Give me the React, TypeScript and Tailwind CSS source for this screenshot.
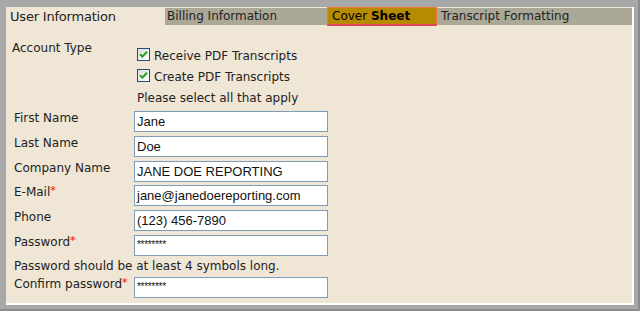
const fields = [
  { label: 'First Name', value: 'Jane' },
  { label: 'Last Name', value: 'Doe' },
  { label: 'Company Name', value: 'JANE DOE REPORTING' },
  { label: 'E-Mail', value: 'jane@janedoereporting.com', required: true },
  { label: 'Phone', value: '(123) 456-7890' },
  { label: 'Password', value: '********', required: true, secret: true },
];

const CheckBox = () => (
  <span className="w-[13px] h-[13px] border border-[#1c5180] bg-gradient-to-br from-[#dcdcd7] to-white flex items-center justify-center">
    <svg width="9" height="9" viewBox="0 0 9 9">
      <path d="M1 4.2 L3.4 6.6 L8 1.8" fill="none" stroke="#21a121" strokeWidth="2" />
    </svg>
  </span>
);

const Req = () => <span className="text-[#f00] text-[11px] align-top leading-none">*</span>;

const Field = ({ value, secret }: { value: string; secret?: boolean }) => (
  <div className="w-[194px] h-[21px] bg-white border border-[#7f9db9] pl-[2px] text-[#111] font-['Liberation_Sans',Arial,sans-serif]">
    {secret ? (
      <div className="text-[10px] leading-none pt-[4px] tracking-[-0.3px]">{value}</div>
    ) : (
      <div className="text-[13px] leading-[19px]">{value}</div>
    )}
  </div>
);

export default function App() {
  return (
    <div className="w-[640px] h-[311px] bg-[#a8a8a8] border-r-2 border-b-2 border-[#8c8c8c] pt-[7px] pl-[6px] pr-[4px] pb-[4px] font-['DejaVu_Sans',Verdana,sans-serif] text-[12px] text-[#222]">
      <div className="h-full bg-[#efe6d6] border-r-2 border-b-2 border-white flex flex-col">
        {/* tabs */}
        <div className="h-[19px] flex items-center">
          <div className="w-[159px] h-[17px] pl-[4px] leading-[17px] text-[13px] tracking-[-0.2px]">User Information</div>
          <div className="w-[162px] h-[17px] pl-[2px] leading-[17px] bg-[#aba897]">Billing Information</div>
          <div className="w-[110px] h-[19px] pl-[4px] leading-[16px] bg-[#b78a00] border border-[#f07838] border-b-2 border-b-[#e0485a] text-black">
            Cover <span className="font-bold">Sheet</span>
          </div>
          <div className="w-[195px] h-[17px] pl-[4px] leading-[17px] bg-[#aba897]">Transcript Formatting</div>
        </div>

        {/* account type */}
        <div className="flex pt-[14px] pl-[6px]">
          <div className="w-[125px] leading-[16px]">Account Type</div>
          <div className="flex flex-col mt-[4px]">
            <div className="h-[21px] flex items-center gap-[4px]">
              <CheckBox />
              <span className="pt-[2px]">Receive PDF Transcripts</span>
            </div>
            <div className="h-[21px] flex items-center gap-[4px]">
              <CheckBox />
              <span className="pt-[2px]">Create PDF Transcripts</span>
            </div>
            <div className="pt-[4px] leading-[16px]">Please select all that apply</div>
          </div>
        </div>

        {/* fields */}
        <div className="flex flex-col gap-[3.8px] mt-[5px] pl-[8px]">
          {fields.map((f) => (
            <div key={f.label} className="flex">
              <div className="w-[120px] leading-[15px]">
                {f.label}
                {f.required && <Req />}
              </div>
              <Field value={f.value} secret={f.secret} />
            </div>
          ))}
          <div className="h-[13.4px] leading-[13.4px]">Password should be at least 4 symbols long.</div>
          <div className="flex">
            <div className="w-[120px] leading-[15px]">
              Confirm password
              <Req />
            </div>
            <Field value="********" secret />
          </div>
        </div>
      </div>
    </div>
  );
}
